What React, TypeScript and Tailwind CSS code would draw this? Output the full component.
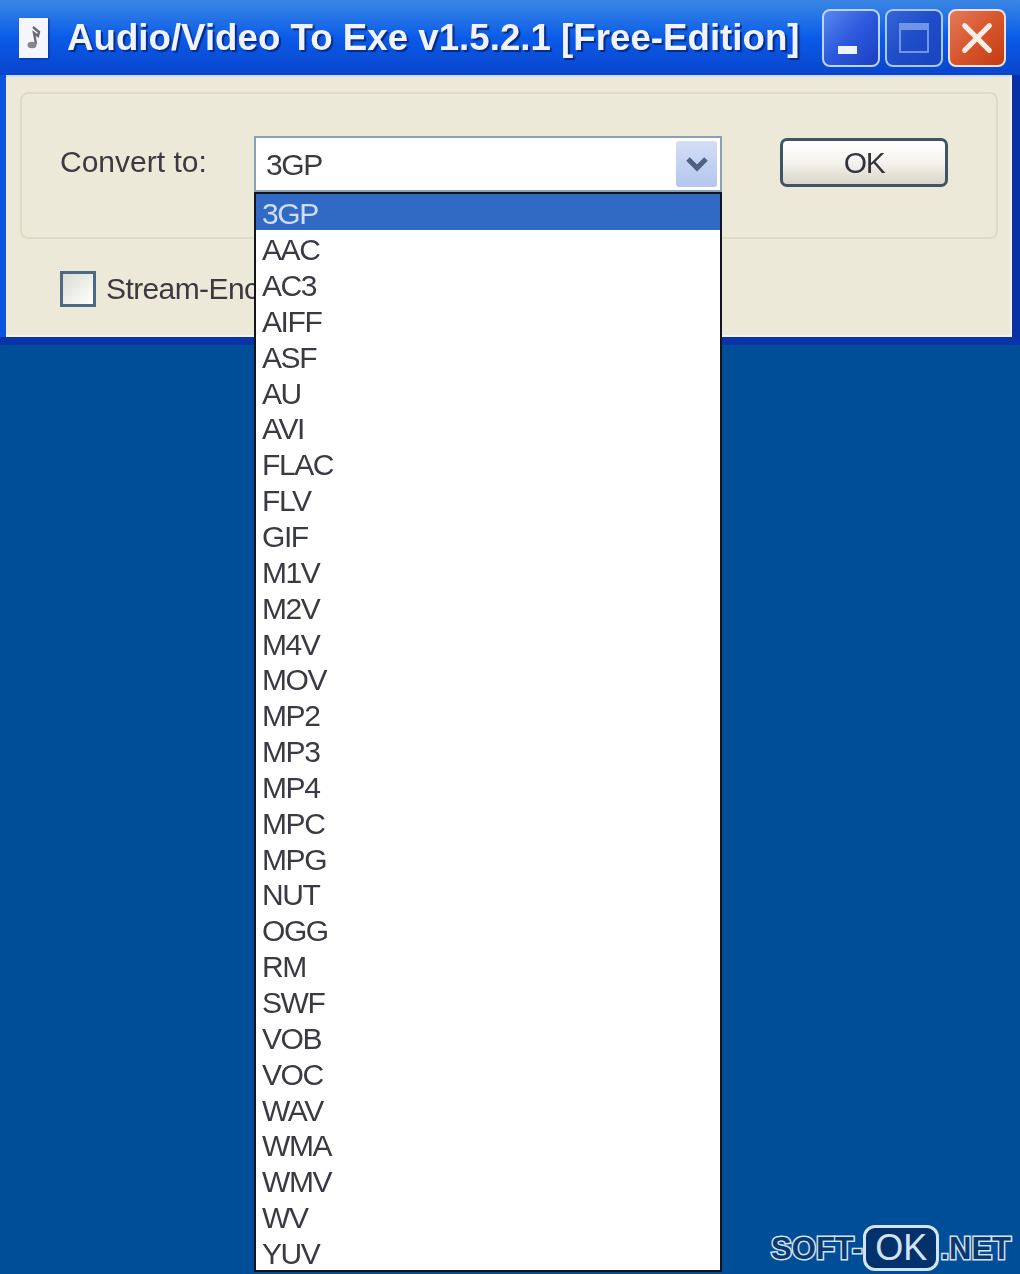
const formats = [
  "3GP", "AAC", "AC3", "AIFF", "ASF", "AU", "AVI", "FLAC", "FLV", "GIF",
  "M1V", "M2V", "M4V", "MOV", "MP2", "MP3", "MP4", "MPC", "MPG", "NUT",
  "OGG", "RM", "SWF", "VOB", "VOC", "WAV", "WMA", "WMV", "WV", "YUV",
];

const font = "font-['Liberation_Sans',Arial,sans-serif]";

function AppIcon() {
  return (
    <div className="flex h-[40px] w-[29px] shrink-0 items-center justify-center bg-[#f4f6fb] shadow-[1px_1px_2px_#06309a]">
      <svg viewBox="0 0 20 28" className="h-[30px] w-[20px] blur-[0.7px]">
        <path d="M9 3 L15 8 L14 12 L10 9 L12 20" fill="none" stroke="#6a6a74" strokeWidth="2.4" />
        <ellipse cx="8" cy="21" rx="4.5" ry="3.2" fill="#85858d" />
      </svg>
    </div>
  );
}

function TitleButtons() {
  const base =
    "flex h-[58px] w-[58px] items-center justify-center rounded-[8px] border-2 border-[#a9c8f5]";
  return (
    <div className="ml-auto mr-[14px] flex gap-[5px] blur-[0.5px]">
      <div className={`${base} items-end bg-gradient-to-br from-[#5a86ee] via-[#2c58dc] to-[#1b3fc0] pb-[11px] border-[#bcd4f8]`}>
        <div className="mr-[8px] h-[8px] w-[19px] bg-[#eef3fe]" />
      </div>
      <div className={`${base} bg-gradient-to-br from-[#3565d8] via-[#1f4cc8] to-[#1a44c0] border-[#6f9bec]`}>
        <div className="h-[30px] w-[30px] border-2 border-t-[7px] border-[#6f95e6]" />
      </div>
      <div className={`${base} bg-gradient-to-br from-[#e27a58] via-[#d8552c] to-[#c23c12] border-[#f2e0d8]`}>
        <svg viewBox="0 0 32 32" className="h-[36px] w-[36px]">
          <path d="M5 5 L27 27 M27 5 L5 27" stroke="#fbeee8" strokeWidth="4.5" strokeLinecap="round" />
        </svg>
      </div>
    </div>
  );
}

function FormatList() {
  return (
    <div className="absolute left-0 top-[56px] z-10 flex w-full flex-col border-2 border-[#14141c] bg-white pb-[1px]">
      {formats.map((name, i) => (
        <div
          key={name}
          className={
            i === 0
              ? "flex h-[35.85px] items-center bg-[#316ac5] pl-[6px] pt-[5px] text-[#cfdcf6]"
              : "flex h-[35.85px] items-center pl-[6px] pt-[5px] text-[#3a3a44]"
          }
        >
          <span className="blur-[0.5px]">{name}</span>
        </div>
      ))}
    </div>
  );
}

function ComboBox() {
  return (
    <div className="relative ml-[50px] h-[56px] w-[468px]">
      <div className="flex h-full items-center border-2 border-[#8aa0b4] bg-white pl-[10px] pr-[3px]">
        <span className="mt-[2px] blur-[0.5px] text-[#3a3a44]">3GP</span>
        <div className="ml-auto flex h-[46px] w-[41px] items-center justify-center rounded-[3px] bg-gradient-to-b from-[#d3def7] to-[#b4c6ee]">
          <svg viewBox="0 0 24 16" className="h-[16px] w-[24px]">
            <path d="M3 3 L12 12 L21 3" fill="none" stroke="#4d6185" strokeWidth="5" />
          </svg>
        </div>
      </div>
      <FormatList />
    </div>
  );
}

function Logo() {
  return (
    <div className={`absolute bottom-[3px] right-[9px] z-20 flex items-center text-[31px] font-bold leading-none tracking-normal text-[#08396f] [paint-order:stroke] [-webkit-text-stroke:3px_#d4e3f4] ${font}`}>
      <span>SOFT-</span>
      <span className="mx-[1px] flex h-[46px] w-[76px] items-center justify-center rounded-[12px] border-[3px] border-[#d4e3f4] bg-[#03316b] text-[36px] font-normal text-[#d4e3f4] [-webkit-text-stroke:0px]">
        OK
      </span>
      <span>.NET</span>
    </div>
  );
}

export default function App() {
  return (
    <div className={`relative h-[1274px] w-full overflow-hidden bg-[#004e98] text-[30px] leading-none tracking-[-1.4px] ${font}`}>
      <div className="flex flex-col bg-gradient-to-r from-[#0a55dc] to-[#0a30a8]">
        <div className="flex h-[75px] items-center bg-gradient-to-b from-[#3a86e4] via-[#0a5be8] to-[#0a44cc] pl-[19px]">
          <AppIcon />
          <span className="ml-[19px] mt-[2px] whitespace-nowrap text-[36.7px] font-bold tracking-normal text-[#eef3fd] blur-[0.4px] [text-shadow:2px_2px_1px_#0a2a80]">
            Audio/Video To Exe v1.5.2.1 [Free-Edition]
          </span>
          <TitleButtons />
        </div>
        <div className="border-b-[8px] border-[#0a33aa] pl-[6px] pr-[8px]">
          <div className="flex h-[262px] flex-col border-t-2 border-r-2 border-b-2 border-[#f2f3ee] border-t-[#cfdcf6] bg-[#ece9d8] pl-[14px] pr-[12px] pt-[15px]">
            <div className="flex h-[147px] items-start rounded-[8px] border-2 border-[#dedac8] pl-[38px] pt-[42px] text-[#3a3a40]">
              <span className="mt-[11px] w-[144px] whitespace-nowrap tracking-normal blur-[0.5px]">Convert to:</span>
              <ComboBox />
              <button className="ml-[58px] mt-[2px] flex h-[49px] w-[168px] items-center justify-center rounded-[7px] border-[3px] border-[#3f5468] bg-gradient-to-b from-[#ffffff] via-[#f4f3ee] to-[#d9d6c8] text-[#33333c]">
                <span className="blur-[0.4px]">OK</span>
              </button>
            </div>
            <div className="ml-[40px] mt-[32px] flex items-center gap-[10px] text-[#3a3a40]">
              <div className="h-[36px] w-[36px] border-[3px] border-[#4a6a86] bg-gradient-to-br from-[#dcdcd4] to-[#ffffff]" />
              <span className="w-[148px] overflow-hidden whitespace-nowrap tracking-[-0.6px] blur-[0.5px]">Stream-Encode</span>
            </div>
          </div>
        </div>
      </div>
      <Logo />
    </div>
  );
}
